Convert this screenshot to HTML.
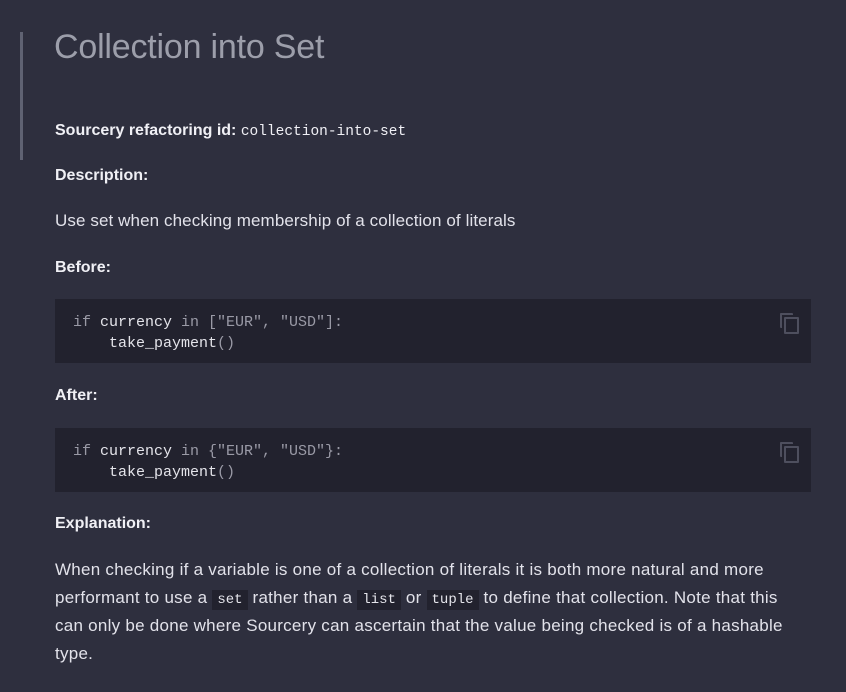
<!DOCTYPE html>
<html><head><style>
body{margin:0;background:#2e2f3e;width:846px;height:692px;overflow:hidden;font-family:"Liberation Sans",sans-serif;color:#e6e6ee;position:relative}
.bar{position:absolute;left:20px;top:32px;width:3px;height:128px;background:#5f6272}
.t{position:absolute;left:55px;white-space:nowrap}
h1{position:absolute;left:54px;top:28px;margin:0;font-weight:normal;font-size:34px;color:#9c9eaa;letter-spacing:-0.2px}
.l{font-size:16px;font-weight:bold;color:#f0f0f5;letter-spacing:0}
.p{font-size:17px;color:#e2e2ea;letter-spacing:0.1px}
.m{font-family:"Liberation Mono",monospace}
.blk{position:absolute;left:55px;width:756px;height:64px;background:#22222e}
.blk pre{margin:0;position:absolute;left:18px;top:13px;font:15px/21px "Liberation Mono",monospace;color:#e4e4ea}
.g{color:#9a9aa6}
.ic{position:absolute;right:14px;top:14px;width:17px;height:19px}
.ic::before,.ic::after{content:"";position:absolute;width:11px;height:13px;border:2px solid #4e4f5e;border-radius:1px}
.ic::before{left:0;top:0;border-right:none;border-bottom:none}
.ic::after{left:4px;top:4px}
.par{position:absolute;left:55px;top:556px;width:745px;font-size:17px;line-height:28px;color:#e2e2ea;letter-spacing:0.26px}
.par code{font-family:"Liberation Mono",monospace;font-size:14px;line-height:14px;background:#22222e;padding:2px 5px;color:#e4e4ea;letter-spacing:0}
</style></head><body>
<div class="bar"></div>
<h1>Collection into Set</h1>
<div class="t l" style="top:122px">Sourcery refactoring id: <span class="m" style="font-weight:normal;font-size:14.5px">collection-into-set</span></div>
<div class="t l" style="top:167px">Description:</div>
<div class="t p" style="top:211px">Use set when checking membership of a collection of literals</div>
<div class="t l" style="top:259px">Before:</div>
<div class="blk" style="top:299px"><pre><span class="g">if</span> currency <span class="g">in ["EUR", "USD"]:</span>
    take_payment<span class="g">()</span></pre><div class="ic"></div></div>
<div class="t l" style="top:387px">After:</div>
<div class="blk" style="top:428px"><pre><span class="g">if</span> currency <span class="g">in {"EUR", "USD"}:</span>
    take_payment<span class="g">()</span></pre><div class="ic"></div></div>
<div class="t l" style="top:515px">Explanation:</div>
<div class="par">When checking if a variable is one of a collection of literals it is both more natural and more performant to use a <code>set</code> rather than a <code>list</code> or <code>tuple</code> to define that collection. Note that this can only be done where Sourcery can ascertain that the value being checked is of a hashable type.</div>
</body></html>
